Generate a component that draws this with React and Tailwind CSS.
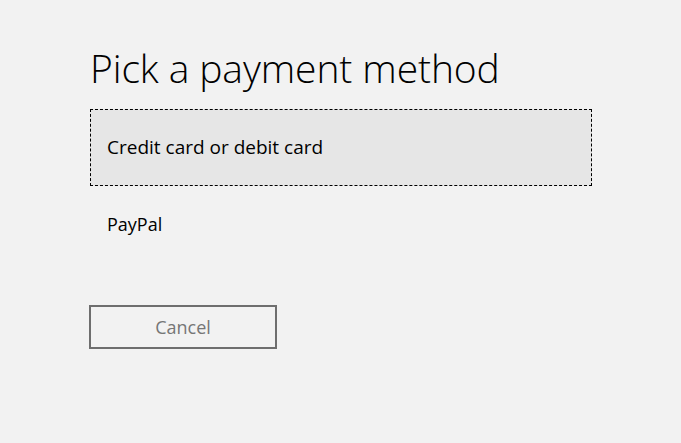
export default function App() {
  return (
    <div
      className="w-full h-[443px] bg-[#f2f2f2] text-black"
      style={{ fontFamily: '"Open Sans", "Noto Sans", sans-serif' }}
    >
      <div className="pl-[89px] pt-[44px]">
        <h1 className="text-[39px] font-light leading-[48px] ml-[1px] mb-[17px] tracking-[-0.1px]">
          Pick a payment method
        </h1>
        <div className="w-[502px] ml-[1px]">
          <div className="h-[77px] border border-dashed border-black bg-[#e6e6e6] flex items-center px-[16px] text-[19px]">
            Credit card or debit card
          </div>
          <div className="h-[77px] flex items-center px-[17px] text-[18px]">
            PayPal
          </div>
        </div>
        <button className="mt-[42px] w-[188px] h-[44px] border-2 border-[#6e6e6e] text-[#767676] text-[18px] flex items-center justify-center">
          Cancel
        </button>
      </div>
    </div>
  );
}
